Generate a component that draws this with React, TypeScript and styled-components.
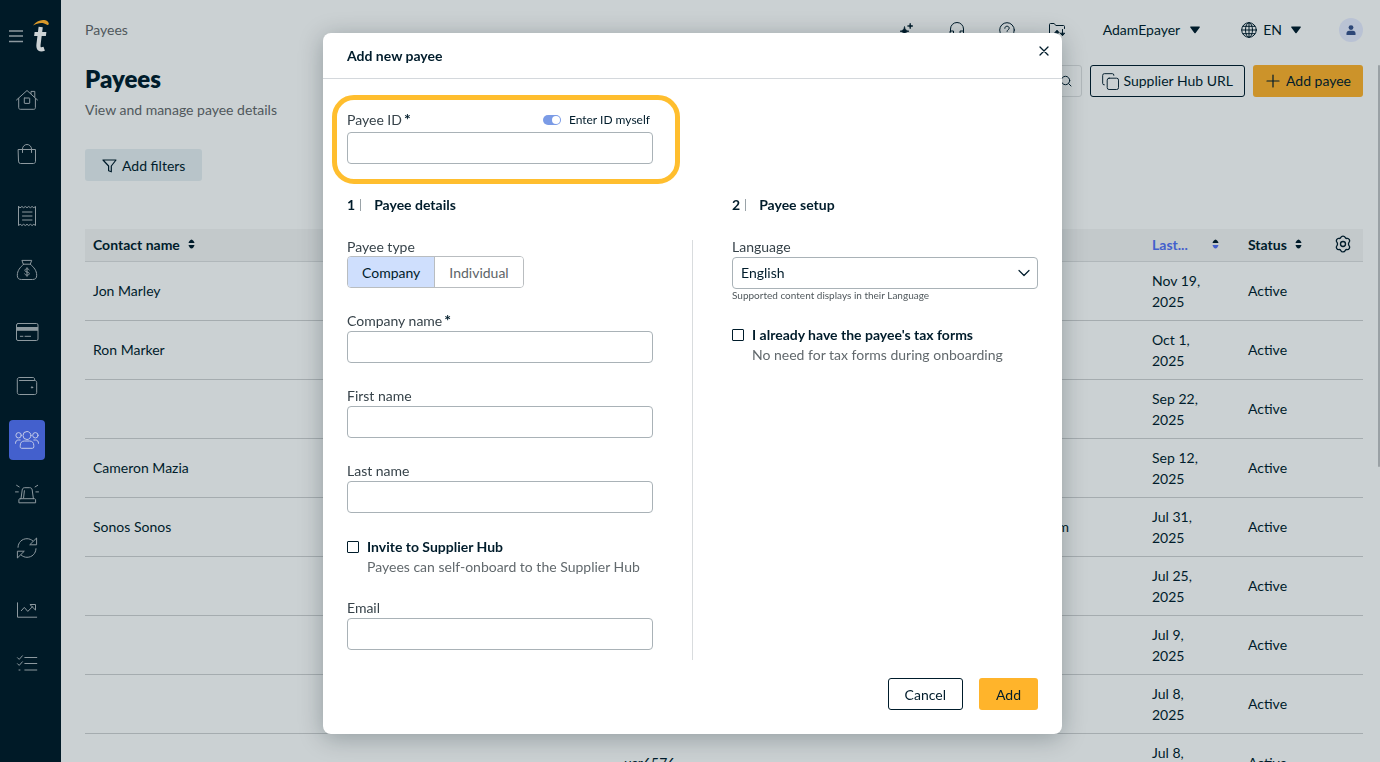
import React, { useState } from "react";
import styled, { createGlobalStyle, css } from "styled-components";

const ink = "#001c2b";
const line = "#a5acaf";

const GlobalStyle = createGlobalStyle`
  * { box-sizing: border-box; }
  body {
    margin: 0;
    background: #cbd1d3;
    color: ${ink};
    font: 14px/20px Lato, "Liberation Sans", sans-serif;
  }
  button, input, select { font: inherit; color: inherit; }
  button { cursor: pointer; }
  svg { display: block; flex: none; }
`;

/* ---------- page frame ---------- */

const Shell = styled.div`
  display: grid;
  grid-template-columns: 61px minmax(0, 1fr);
  height: 100vh;
  overflow: hidden;
`;

const Sidebar = styled.aside`
  background: #001a27;
  color: #8d999f;
`;

const Brand = styled.div`
  display: flex;
  align-items: center;
  gap: 8px;
  height: 72px;
  padding-left: 8px;
`;

const PlainButton = styled.button`
  display: flex;
  align-items: center;
  justify-content: center;
  padding: 0;
  border: 0;
  background: none;
`;

const NavGroups = styled.nav`
  display: flex;
  flex-direction: column;
  gap: 22px;
  padding: 8px 9px;
`;

const NavGroup = styled.div`
  display: flex;
  flex-direction: column;
  gap: 14px;
`;

const NavLink = styled.a<{ $active?: boolean }>`
  display: flex;
  align-items: center;
  justify-content: center;
  width: 36px;
  height: 40px;
  border-radius: 4px;
  color: ${(p) => (p.$active ? "#c3cbe8" : "inherit")};
  background: ${(p) => (p.$active ? "#4360cd" : "none")};
`;

const Main = styled.main`
  position: relative;
  padding: 0 17px 0 24px;
`;

const ScrollThumb = styled.div`
  position: absolute;
  top: 65px;
  right: 0;
  width: 2px;
  height: 402px;
  border-radius: 2px;
  background: #9aa1a5;
`;

const TopBar = styled.header`
  display: flex;
  align-items: center;
  height: 60px;
`;

const Muted = styled.span`
  color: #50585c;
`;

const TopTools = styled.div`
  display: flex;
  align-items: center;
  margin-left: auto;
`;

const ToolButton = styled(PlainButton)`
  width: 50px;
  height: 24px;
`;

const MenuButton = styled(PlainButton)<{ $before: number; $gap: number }>`
  gap: ${(p) => p.$gap}px;
  margin-left: ${(p) => p.$before}px;
`;

const Pair = styled.span`
  display: flex;
  align-items: center;
  gap: 6px;
`;

const Avatar = styled(PlainButton)`
  width: 24px;
  height: 24px;
  margin-left: 38px;
  border-radius: 50%;
  background: #b9c2d4;
`;

const TitleRow = styled.div`
  display: flex;
  align-items: flex-start;
  justify-content: space-between;
  padding-top: 5px;
`;

const Title = styled.h1`
  margin: 0 0 7px;
  font-size: 24px;
  line-height: 28px;
  font-weight: 800;
`;

const Actions = styled.div`
  display: flex;
  gap: 8px;
`;

const SearchBox = styled.label`
  display: flex;
  align-items: center;
  width: 240px;
  height: 32px;
  padding: 0 9px;
  border: 1px solid #b1b8bb;
  border-radius: 3px;
  input {
    flex: 1;
    min-width: 0;
    border: 0;
    background: none;
    outline: none;
  }
`;

const Button = styled.button<{ $kind: "outline" | "primary" | "soft"; $dim?: boolean; $pad?: number }>`
  display: flex;
  align-items: center;
  justify-content: center;
  gap: 5px;
  height: 32px;
  padding: 0 ${(p) => p.$pad ?? 16}px;
  border: 1px solid transparent;
  border-radius: 3px;
  white-space: nowrap;
  ${(p) => p.$kind === "outline" && css`border-color: ${ink}; background: none;`}
  ${(p) => p.$kind === "primary" && css`background: ${p.$dim ? "#cc932a" : "#ffb42b"};`}
  ${(p) => p.$kind === "soft" && css`background: #b8c4c9;`}
`;

const Filters = styled.div`
  display: flex;
  padding: 29px 0 48px;
  button { padding-top: 2px; }
`;

const Table = styled.table`
  width: 100%;
  border-collapse: separate;
  border-spacing: 0;
  table-layout: fixed;
  th, td {
    height: 59px;
    padding: 0 8px 2px;
    border-bottom: 1px solid ${line};
    text-align: left;
    line-height: 21px;
  }
  th {
    height: 33px;
    background: #c3c9cb;
    border-color: #b0b7ba;
  }
`;

const Head = styled.span<{ $wide?: boolean; $active?: boolean }>`
  display: flex;
  align-items: center;
  gap: 8px;
  justify-content: ${(p) => (p.$wide ? "space-between" : "flex-start")};
  padding-right: ${(p) => (p.$wide ? 13 : 0)}px;
  color: ${(p) => (p.$active ? "#4360cd" : "inherit")};
`;

const ContactCell = styled.td`
  && {
    padding-right: 75px;
    text-align: right;
  }
`;

const DateCell = styled.td`
  && { padding-bottom: 0; }
`;

/* ---------- dialog ---------- */

const Backdrop = styled.div`
  position: fixed;
  inset: 0;
  display: flex;
  align-items: center;
  justify-content: center;
  padding: 5px 0 0 5px;
`;

const Dialog = styled.section`
  width: 739px;
  max-width: 100%;
  border-radius: 8px;
  background: #fff;
  box-shadow: 0 4px 24px rgba(0, 20, 30, 0.28);
`;

const DialogHead = styled.header`
  display: flex;
  align-items: center;
  justify-content: space-between;
  height: 46px;
  padding: 0 12px 0 24px;
  border-bottom: 1px solid #d4d8dc;
  h2 {
    margin: 0;
    font-size: 14px;
    line-height: 20px;
  }
`;

const CloseButton = styled(PlainButton)`
  width: 12px;
  height: 12px;
  margin-bottom: 9px;
`;

const DialogBody = styled.form`
  padding: 31px 24px 24px;
`;

const Columns = styled.div`
  display: grid;
  grid-template-columns: minmax(0, 1fr) 1px minmax(0, 1fr);
  column-gap: 39px;
`;

const PayeeId = styled.div`
  position: relative;
`;

const Spotlight = styled.div`
  position: absolute;
  inset: -15px -27px -20px -15px;
  border: 5px solid #ffbe2e;
  border-radius: 22px;
  pointer-events: none;
`;

const IdHead = styled.div`
  display: flex;
  align-items: center;
  justify-content: space-between;
  height: 20px;
  margin-bottom: 2px;
`;

const Label = styled.label`
  display: block;
  color: #37434a;
  line-height: 19px;
`;

const InputLabel = styled(Label)`
  margin-bottom: 2px;
  line-height: 17px;
  b {
    margin-left: 2px;
    color: ${ink};
    font-size: 16px;
    line-height: 16px;
  }
`;

const SwitchLabel = styled.label`
  display: flex;
  align-items: center;
  gap: 8px;
  padding-right: 3px;
  font-size: 12px;
`;

const Switch = styled.input`
  appearance: none;
  display: flex;
  width: 18px;
  height: 10px;
  margin: 0;
  padding: 1px;
  border-radius: 5px;
  background: #b0b7ba;
  &::before {
    content: "";
    width: 8px;
    height: 8px;
    border-radius: 50%;
    background: #fff;
  }
  &:checked { background: #7b9be6; }
  &:checked::before { margin-left: auto; }
`;

const control = css`
  display: block;
  width: 100%;
  height: 32px;
  padding: 0 8px;
  border: 1px solid #a9b2b7;
  border-radius: 4px;
  background: #fff;
`;

const TextInput = styled.input`
  ${control}
`;

const Select = styled.select`
  ${control}
  appearance: none;
`;

const SelectWrap = styled.div`
  position: relative;
  margin-top: 1px;
  svg {
    position: absolute;
    right: 8px;
    top: 10px;
    pointer-events: none;
  }
`;

const Helper = styled.div`
  color: #50585c;
  font-size: 10px;
  line-height: 12px;
`;

const SectionHead = styled.h3`
  display: flex;
  align-items: center;
  margin: 31px 0 22px;
  font-size: 14px;
  line-height: 20px;
  span {
    margin-right: 13px;
    padding-right: 5px;
    line-height: 12px;
    border-right: 1px solid #9aa3a8;
  }
`;

const Divider = styled.div`
  margin: 3px 0 0;
  background: #d9dcde;
`;

const Column = styled.div`
  padding-bottom: 10px;
`;

const Field = styled.div`
  & + & { margin-top: 24px; }
`;

const Segments = styled.div`
  display: inline-flex;
  height: 32px;
  overflow: hidden;
  border: 1px solid #b9bdc0;
  border-radius: 4px;
  vertical-align: top;
`;

const Segment = styled.button<{ $on: boolean }>`
  padding: 2px 14px 0;
  border: 0;
  background: ${(p) => (p.$on ? "#cfdffd" : "#fff")};
  color: ${(p) => (p.$on ? ink : "#5d6468")};
  & + & { border-left: 1px solid #b9bdc0; }
`;

const CheckRow = styled.label`
  display: grid;
  grid-template-columns: 12px 1fr;
  column-gap: 8px;
  align-items: center;
  margin: 24px 0 22px;
`;

const CheckBox = styled.input`
  appearance: none;
  width: 12px;
  height: 12px;
  margin: 0;
  border: 1px solid ${ink};
  border-radius: 1px;
  &:checked { background: #4360cd; }
`;

const CheckNote = styled.span`
  grid-column: 2;
  color: #62696d;
`;

const Footer = styled.footer`
  display: flex;
  justify-content: flex-end;
  gap: 16px;
  padding-top: 18px;
  button { padding-top: 2px; }
`;

/* ---------- drawings ---------- */

const Icon = ({ children, size = 24, width = 1, box = 24 }: { children: React.ReactNode; size?: number; width?: number; box?: number }) => (
  <svg width={size} height={size} viewBox={`0 0 ${box} ${box}`} fill="none" stroke="currentColor" strokeWidth={width} strokeLinejoin="round" strokeLinecap="round" aria-hidden="true">
    {children}
  </svg>
);

const Caret = () => (
  <svg width="10" height="8" viewBox="0 0 10 8" fill="currentColor" aria-hidden="true">
    <path d="M.8.5h8.4a.6.6 0 0 1 .5 1L5.6 7a.8.8 0 0 1-1.2 0L.3 1.5a.6.6 0 0 1 .5-1z" />
  </svg>
);

const Sort = () => (
  <svg width="7" height="10" viewBox="0 0 7 10" aria-hidden="true">
    <path d="M3.5.5C4.800.8 6 2.200 6.500 4.100H.5C1 2.200 2.200.8 3.500.5z" fill={ink} />
    <path d="M3.500 9.500C4.800 9.200 6 7.800 6.500 5.900H.5C1 7.800 2.200 9.200 3.500 9.500z" fill="currentColor" />
  </svg>
);

const navIcons: { label: string; active?: boolean; art: React.ReactNode }[][] = [
  [
    {
      label: "Home",
      art: (
        <>
          <path d="M1.5 12 12 2.5 22.5 12M16 5.5V3.4h3.8v5.5M3.7 10.5v9.2c0 .9.6 1.6 1.6 1.6h13.5c1 0 1.6-.7 1.6-1.6v-9.2" />
          <rect x="9.3" y="10" width="5.4" height="5.4" rx=".4" />
        </>
      ),
    },
    {
      label: "Bills",
      art: <path d="M3.5 7.5h17v12c0 1.1-.9 2-2 2h-13a2 2 0 0 1-2-2zM7.5 10.5V7a4.5 4.5 0 0 1 9 0v3.5" />,
    },
  ],
  [
    {
      label: "Invoices",
      art: (
        <path d="M3.5 2.5v19l1.7-1.2 1.7 1.2 1.7-1.2 1.7 1.2 1.7-1.2 1.7 1.2 1.7-1.2 1.7 1.2 1.7-1.2 1.7 1.2v-19l-1.7 1.2-1.7-1.2-1.7 1.2-1.7-1.2L12 3.7l-1.7-1.2-1.7 1.2-1.7-1.2-1.7 1.2zM7.5 8h9.5M7.5 12h9.5M7.5 16h9.5" />
      ),
    },
    {
      label: "Payments",
      art: (
        <path d="M7.3 2.4h9.4l-1.4 3.8H8.7zM8.7 6.2C5 9.5 2.3 12.5 2.3 17.3c0 3 1.4 4.2 4.2 4.2h11c2.8 0 4.2-1.2 4.2-4.2 0-4.8-2.7-7.8-6.4-11.1M14.2 12c-.4-.8-1.2-1.2-2.2-1.2-1.2 0-2.1.6-2.1 1.6 0 2.2 4.4 1 4.4 3.2 0 1-1 1.6-2.2 1.6-1.1 0-2-.4-2.4-1.3M12 9.7v8.6" />
      ),
    },
  ],
  [
    {
      label: "Cards",
      art: (
        <>
          <rect x="1.5" y="3.5" width="21.5" height="17" rx="1.5" />
          <path d="M1.5 7h21.500v3.800h-21.500z" fill="currentColor" stroke="none" />
          <path d="M5.3 16.3h2.6M10 16.3h5.6" />
        </>
      ),
    },
    {
      label: "Wallet",
      art: (
        <>
          <path d="M4.7 3.5h13.2c1 0 1.7.7 1.7 1.600v1.400M4.5 6.5h15.200c1.200 0 2 .8 2 2v10c0 1.200-.8 2-2 2H4.300c-1.200 0-2-.8-2-2V5.300c0-1 .9-1.800 2-1.800" />
          <circle cx="17" cy="13.4" r=".7" fill="currentColor" />
        </>
      ),
    },
    {
      label: "Payees",
      active: true,
      art: (
        <>
          <circle cx="12" cy="7.5" r="4" />
          <circle cx="3.6" cy="7.3" r="2.7" />
          <circle cx="20.4" cy="7.3" r="2.7" />
          <path d="M5.2 17.5c0-2.900 1.600-4.500 4.200-4.500h5.200c2.600 0 4.200 1.600 4.200 4.500v1.300c0 1-.5 1.500-1.400 1.500H6.600c-.9 0-1.400-.5-1.400-1.500zM.5 15.300C.5 13.200 1.600 12 3.500 12h1.700M23.500 15.300c0-2.100-1.100-3.300-3-3.300h-1.700" />
        </>
      ),
    },
    {
      label: "Alerts",
      art: (
        <path d="M6 16.7 7.2 8c.2-1.500 1-2.300 2.500-2.300h5c1.500 0 2.300.8 2.500 2.300l1.200 8.700M5.200 16.700h14c1 0 1.400.5 1.400 1.200v2.900H3.900v-2.900c0-.7.4-1.200 1.300-1.200zM9.400 8.700l-.8 7M.5 9.900h2.800M20.900 9.900h2.600M1.600 3.300l2.600 1.600M22.700 3.300l-2.600 1.600" />
      ),
    },
    {
      label: "Sync",
      art: (
        <path d="M3 11.300C3.200 6.300 7 2.700 12 2.700c2.300 0 4.200.8 5.800 2.200M21 12.700c-.2 5-4 8.600-9 8.600-2.300 0-4.200-.8-5.800-2.200M21.600 2.400v6.400h-6.500zM2.400 21.600v-6.400h6.500z" />
      ),
    },
  ],
  [
    {
      label: "Reports",
      art: <path d="M2.500 4.800v14.400h19.200M6.300 12.700l3-3.300 3.500 4 4.800-4.800M15.300 6.500h5.200v5.200z" />,
    },
    {
      label: "Tasks",
      art: <path d="M2.500 5.700 4.200 7.400 7.400 3.800M2.500 11.700l1.700 1.700 3.200-3.600M4 18h1M9.800 5.500h12M9.800 11.500h12M9.800 18h12" />,
    },
  ],
];

const rows: { name: string; id?: string; contact?: string; date: string }[] = [
  { name: "Jon Marley", date: "Nov 19, 2025" },
  { name: "Ron Marker", date: "Oct 1, 2025" },
  { name: "", date: "Sep 22, 2025" },
  { name: "Cameron Mazia", date: "Sep 12, 2025" },
  { name: "Sonos Sonos", contact: "m", date: "Jul 31, 2025" },
  { name: "", date: "Jul 25, 2025" },
  { name: "", date: "Jul 9, 2025" },
  { name: "", date: "Jul 8, 2025" },
  { name: "", id: "usr6576", date: "Jul 8, 2025" },
];

const DateText = ({ value }: { value: string }) => {
  const [day, year] = value.split(", ");
  return (
    <>
      {day},<br />
      {year}
    </>
  );
};

function TextField({ id, label, required }: { id: string; label: string; required?: boolean }) {
  return (
    <Field>
      <InputLabel htmlFor={id}>
        {label}
        {required && <b>*</b>}
      </InputLabel>
      <TextInput id={id} type="text" required={required} />
    </Field>
  );
}

function AddPayeeDialog() {
  const [type, setType] = useState("Company");
  return (
    <Backdrop>
      <Dialog role="dialog" aria-labelledby="dialog-title">
        <DialogHead>
          <h2 id="dialog-title">Add new payee</h2>
          <CloseButton type="button" aria-label="Close">
            <Icon size={12} box={12} width={1.3}>
              <path d="M2 2l8 8M10 2l-8 8" />
            </Icon>
          </CloseButton>
        </DialogHead>
        <DialogBody onSubmit={(e) => e.preventDefault()}>
          <Columns>
            <PayeeId>
              <IdHead>
                <InputLabel htmlFor="payee-id">
                  Payee ID<b>*</b>
                </InputLabel>
                <SwitchLabel>
                  <Switch type="checkbox" role="switch" defaultChecked />
                  Enter ID myself
                </SwitchLabel>
              </IdHead>
              <TextInput id="payee-id" type="text" required />
              <Spotlight />
            </PayeeId>
          </Columns>
          <Columns>
            <SectionHead>
              <span>1</span>Payee details
            </SectionHead>
            <i />
            <SectionHead>
              <span>2</span>Payee setup
            </SectionHead>
          </Columns>
          <Columns>
            <Column>
              <Field>
                <Label as="div" id="type-label">
                  Payee type
                </Label>
                <Segments role="group" aria-labelledby="type-label">
                  {["Company", "Individual"].map((t) => (
                    <Segment key={t} type="button" $on={t === type} aria-pressed={t === type} onClick={() => setType(t)}>
                      {t}
                    </Segment>
                  ))}
                </Segments>
              </Field>
              <TextField id="company" label="Company name" required />
              <TextField id="first" label="First name" />
              <TextField id="last" label="Last name" />
              <CheckRow>
                <CheckBox type="checkbox" />
                <b>Invite to Supplier Hub</b>
                <CheckNote>Payees can self-onboard to the Supplier Hub</CheckNote>
              </CheckRow>
              <TextField id="email" label="Email" />
            </Column>
            <Divider />
            <Column>
              <Label htmlFor="language">Language</Label>
              <SelectWrap>
                <Select id="language" defaultValue="English">
                  <option>English</option>
                </Select>
                <Icon size={12} box={12} width={1.2}>
                  <path d="M1 3.5l5 5 5-5" />
                </Icon>
              </SelectWrap>
              <Helper>Supported content displays in their Language</Helper>
              <CheckRow>
                <CheckBox type="checkbox" />
                <b>I already have the payee's tax forms</b>
                <CheckNote>No need for tax forms during onboarding</CheckNote>
              </CheckRow>
            </Column>
          </Columns>
          <Footer>
            <Button type="button" $kind="outline">
              Cancel
            </Button>
            <Button type="submit" $kind="primary">
              Add
            </Button>
          </Footer>
        </DialogBody>
      </Dialog>
    </Backdrop>
  );
}

export default function App() {
  return (
    <>
      <GlobalStyle />
      <Shell>
        <Sidebar>
          <Brand>
            <PlainButton aria-label="Menu">
              <svg width="16" height="14" viewBox="0 0 16 14" stroke="#8d999f" strokeWidth="1.5" aria-hidden="true">
                <path d="M1 2h14M1 7h14M1 12.5h14" />
              </svg>
            </PlainButton>
            <svg width="20" height="36" viewBox="0 0 20 36" aria-hidden="true">
              <path d="M1 7.500C4 3.500 9 1 13.500 2.300c1.800.5 3 1.700 3.300 3.200.2 1.300-1.300 2-2.400 1.100C11.500 4.200 6 4.300 1 7.500z" fill="#d9992a" />
              <path d="M8.700 9 6.500 26.500c-.5 4.200 1.300 5.800 5.700 4.300" fill="none" stroke="#cdd3d5" strokeWidth="4.200" />
              <path d="M2.600 14h11.800l-.5 4H2.100z" fill="#cdd3d5" />
            </svg>
          </Brand>
          <NavGroups>
            {navIcons.map((group, i) => (
              <NavGroup key={i}>
                {group.map((item) => (
                  <NavLink key={item.label} href="#" aria-label={item.label} $active={item.active}>
                    <Icon>{item.art}</Icon>
                  </NavLink>
                ))}
              </NavGroup>
            ))}
          </NavGroups>
        </Sidebar>
        <Main>
          <TopBar>
            <Muted>Payees</Muted>
            <TopTools>
              <ToolButton aria-label="Assistant">
                <svg width="16" height="16" viewBox="0 0 16 16" fill="currentColor" aria-hidden="true">
                  <path d="M5.500 4.500c.5 3.200 1.500 4.200 4.500 4.700-3 .5-4 1.500-4.500 4.700C5 10.700 4 9.700 1 9.200c3-.5 4-1.500 4.500-4.700zM11.200 1.200c.3 2 .8 2.500 2.800 2.800-2 .3-2.500.8-2.800 2.800-.3-2-.8-2.500-2.800-2.800 2-.3 2.500-.8 2.800-2.800z" stroke="currentColor" strokeWidth=".7" />
                </svg>
              </ToolButton>
              <ToolButton aria-label="Support">
                <Icon size={16} box={16}>
                  <path d="M1.500 9.500V7a6.500 6.500 0 0 1 13 0v2.500M1.500 9h3v5h-3zM11.500 9h3v5h-3z" />
                </Icon>
              </ToolButton>
              <ToolButton aria-label="Help">
                <Icon size={16} box={16}>
                  <circle cx="8" cy="8" r="7.3" />
                  <path d="M5.8 6.300c0-1.300 1-2.100 2.200-2.100s2.200.8 2.200 2c0 1.500-2.200 1.600-2.200 3.200M8 11.500v.3" />
                </Icon>
              </ToolButton>
              <ToolButton aria-label="Transfers">
                <Icon size={18} box={18}>
                  <path d="M5 15.500H2.500c-.6 0-1-.4-1-1v-11c0-.6.4-1 1-1h3.700l1.600 2h7.700c.6 0 1 .4 1 1v2" />
                  <path d="M9 14.500V10M7 11.500l2-2.200 2 2.200zM14.500 8.500v5M12.500 12.500l2 2.200 2-2.200z" fill="currentColor" width="1.200" />
                </Icon>
              </ToolButton>
              <MenuButton $before={21} $gap={10}>
                AdamEpayer
                <Caret />
              </MenuButton>
              <MenuButton $before={41} $gap={9}>
                <Pair>
                  <Icon size={16} box={16}>
                    <circle cx="8" cy="8" r="7.3" />
                    <ellipse cx="8" cy="8" rx="3.5" ry="7.3" />
                    <path d="M8 .7v14.600M.7 8h14.600M2 4.300h12M2 11.700h12" />
                  </Icon>
                  EN
                </Pair>
                <Caret />
              </MenuButton>
              <Avatar aria-label="Account">
                <svg width="10" height="10" viewBox="0 0 10 10" fill="#2d4778" aria-hidden="true">
                  <circle cx="5" cy="2.6" r="2.4" />
                  <path d="M.5 10V8.200c0-1.500 1-2.400 2.500-2.400h4c1.500 0 2.500.9 2.500 2.400V10z" />
                </svg>
              </Avatar>
            </TopTools>
          </TopBar>
          <TitleRow>
            <div>
              <Title>Payees</Title>
              <Muted>View and manage payee details</Muted>
            </div>
            <Actions>
              <SearchBox>
                <input type="search" aria-label="Search" />
                <Icon size={12} box={12}>
                  <circle cx="5.5" cy="5.5" r="4.2" />
                  <path d="M8.600 8.600 11 11" />
                </Icon>
              </SearchBox>
              <Button $kind="outline" $pad={11}>
                <Icon size={17} box={18}>
                  <rect x="5.500" y="5.500" width="12" height="12" rx="2" />
                  <path d="M2.500 12.500h-.3a1.500 1.500 0 0 1-1.500-1.500V2.500A1.800 1.800 0 0 1 2.500.7H11a1.500 1.500 0 0 1 1.500 1.500v.3" />
                </Icon>
                Supplier Hub URL
              </Button>
              <Button $kind="primary" $dim $pad={11}>
                <Icon size={16} box={16} width={1.2}>
                  <path d="M8 2v12M2 8h12" />
                </Icon>
                Add payee
              </Button>
            </Actions>
          </TitleRow>
          <Filters>
            <Button $kind="soft">
              <Icon size={15} box={15} width={1.2}>
                <path d="M1 1h13L9.300 7v5.800l-2.700-1V7z" />
              </Icon>
              Add filters
            </Button>
          </Filters>
          <Table>
            <colgroup>
              <col />
              <col style={{ width: 309 }} />
              <col style={{ width: 219 }} />
              <col style={{ width: 96 }} />
              <col style={{ width: 85 }} />
              <col style={{ width: 38 }} />
            </colgroup>
            <thead>
              <tr>
                <th>
                  <Head>
                    Contact name <Sort />
                  </Head>
                </th>
                <th />
                <th />
                <th>
                  <Head $wide $active>
                    Last... <Sort />
                  </Head>
                </th>
                <th>
                  <Head>
                    Status <Sort />
                  </Head>
                </th>
                <th>
                  <PlainButton aria-label="Table settings">
                    <Icon size={20} box={24} width={1.6}>
                      <path d="M12 2.500c1.200 0 2 .3 2.500 1.500.4 1 1.300 1.500 2.400 1.300 1.400-.2 2 .3 2.700 1.400.6 1.100.7 2-.2 3-.8.9-.8 1.700-.8 2.300s0 1.400.8 2.300c.9 1 .8 1.900.2 3-.7 1.100-1.300 1.600-2.700 1.400-1.100-.2-2 .3-2.400 1.300-.5 1.200-1.300 1.500-2.500 1.500s-2-.3-2.500-1.500c-.4-1-1.300-1.500-2.400-1.300-1.400.2-2-.3-2.700-1.400-.6-1.100-.7-2 .2-3 .8-.9.8-1.700.8-2.300s0-1.400-.8-2.300c-.9-1-.8-1.900-.2-3 .7-1.100 1.300-1.600 2.700-1.400 1.100.2 2-.3 2.400-1.300.5-1.200 1.300-1.500 2.500-1.500z" />
                      <circle cx="12" cy="12" r="3" />
                    </Icon>
                  </PlainButton>
                </th>
              </tr>
            </thead>
            <tbody>
              {rows.map((r, i) => (
                <tr key={i}>
                  <td>{r.name}</td>
                  <td>{r.id}</td>
                  <ContactCell>{r.contact}</ContactCell>
                  <DateCell>
                    <DateText value={r.date} />
                  </DateCell>
                  <td>Active</td>
                  <td />
                </tr>
              ))}
            </tbody>
          </Table>
          <ScrollThumb />
        </Main>
      </Shell>
      <AddPayeeDialog />
    </>
  );
}
